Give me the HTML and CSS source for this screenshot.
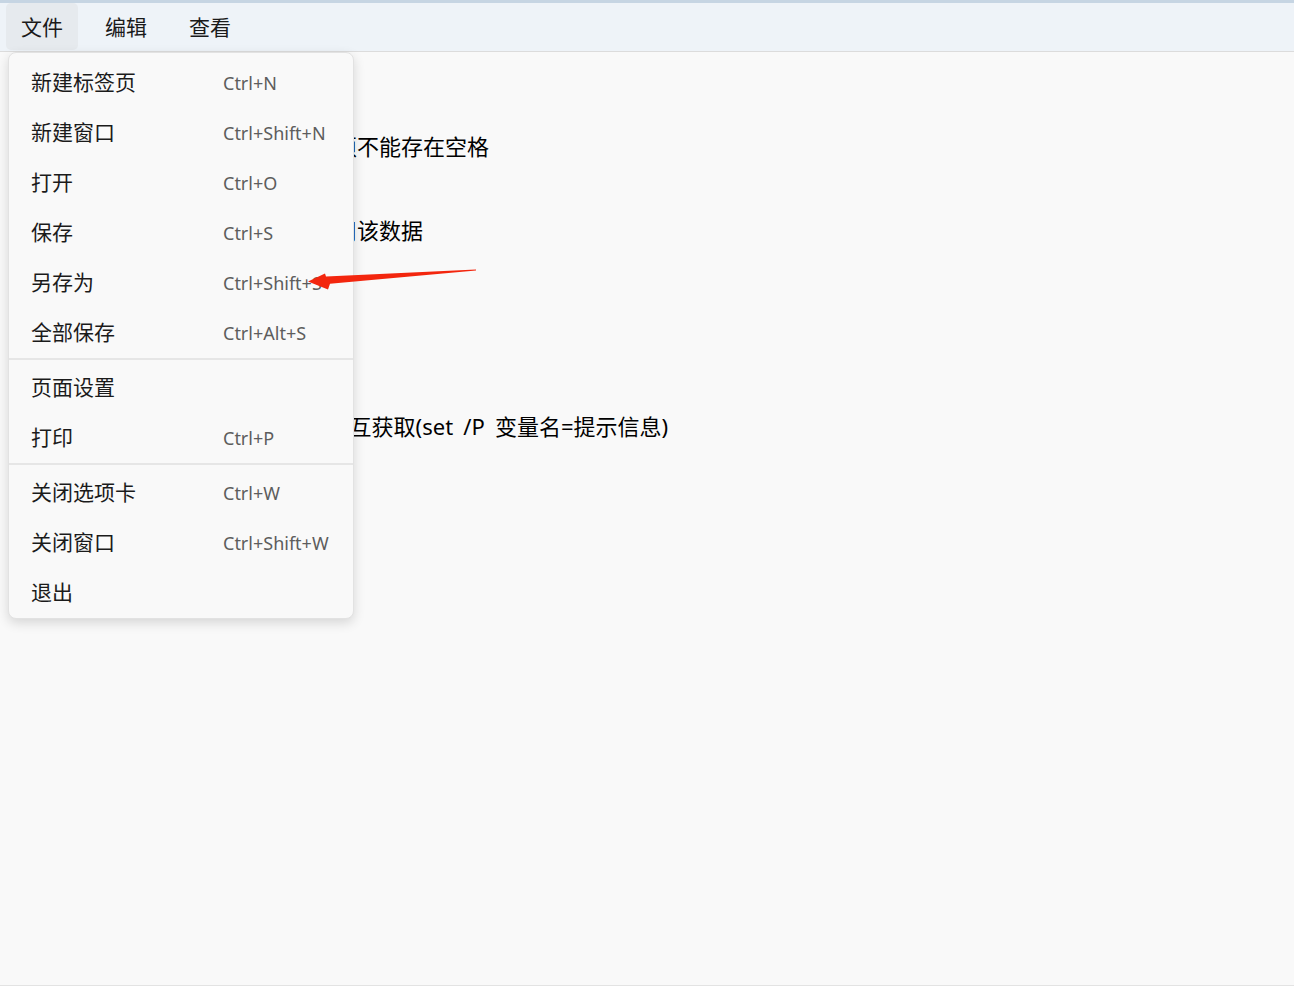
FILE: index.html
```html
<!DOCTYPE html>
<html lang="zh-CN">
<head>
<meta charset="utf-8">
<title>记事本</title>
<link rel="stylesheet" href="styles.css">
</head>
<body>
<div class="app">
  <div class="topline"></div>
  <nav class="menubar">
    <div class="mb-item active">文件</div>
    <div class="mb-item">编辑</div>
    <div class="mb-item">查看</div>
  </nav>
  <main class="editor">
    <div class="line"></div>
    <div class="line"></div>
    <div class="line">一、变量定义时等号前后两边必须不能存在空格</div>
    <div class="line"></div>
    <div class="line"></div>
    <div class="line">二、用百分号包裹变量名即可引用该数据</div>
    <div class="line"></div>
    <div class="line"></div>
    <div class="line"></div>
    <div class="line"></div>
    <div class="line"></div>
    <div class="line"></div>
    <div class="line wide">3、变量的值也可以通过与用户交互获取(set /P 变量名=提示信息)</div>
  </main>

  <div class="menu">
    <div class="mi"><span class="lbl">新建标签页</span><span class="sc">Ctrl+N</span></div>
    <div class="mi"><span class="lbl">新建窗口</span><span class="sc">Ctrl+Shift+N</span></div>
    <div class="mi"><span class="lbl">打开</span><span class="sc">Ctrl+O</span></div>
    <div class="mi"><span class="lbl">保存</span><span class="sc">Ctrl+S</span></div>
    <div class="mi"><span class="lbl">另存为</span><span class="sc">Ctrl+Shift+S</span></div>
    <div class="mi"><span class="lbl">全部保存</span><span class="sc">Ctrl+Alt+S</span></div>
    <div class="sep"></div>
    <div class="mi"><span class="lbl">页面设置</span><span class="sc"></span></div>
    <div class="mi"><span class="lbl">打印</span><span class="sc">Ctrl+P</span></div>
    <div class="sep"></div>
    <div class="mi"><span class="lbl">关闭选项卡</span><span class="sc">Ctrl+W</span></div>
    <div class="mi"><span class="lbl">关闭窗口</span><span class="sc">Ctrl+Shift+W</span></div>
    <div class="mi"><span class="lbl">退出</span><span class="sc"></span></div>
  </div>

  <svg class="arrow" width="180" height="30" viewBox="300 265 180 30" xmlns="http://www.w3.org/2000/svg">
    <polygon points="308,281.5 325,273.5 326,276.6 476,269.4 476,270.4 330,283.8 328,289.5" fill="#f3260e"/>
  </svg>
</div>
</body>
</html>
```

FILE: styles.css
```css
* { box-sizing: border-box; }
html, body { margin: 0; padding: 0; }
body {
  background: #f9f9f9;
  font-family: "Microsoft YaHei", "Noto Sans CJK SC", "Noto Sans", sans-serif;
  color: #000;
}
.app {
  position: relative;
  height: 986px;
  display: flex;
  flex-direction: column;
  overflow: hidden;
}
.topline {
  height: 3px;
  background: #c6d5e3;
  flex: none;
}
.menubar {
  height: 49px;
  flex: none;
  background: #eef3f8;
  border-bottom: 1px solid #dcdcdc;
  display: flex;
  align-items: flex-start;
  gap: 12px;
  padding-left: 6px;
}
.mb-item {
  height: 47px;
  width: 72px;
  display: flex;
  align-items: center;
  justify-content: center;
  font-size: 21px;
  color: #1a1a1a;
  border-radius: 5px;
  padding-bottom: 2px;
}
.mb-item.active { background: #e6eaee; }
.editor {
  flex: 1;
  padding: 24px 0 0 27px;
  border-bottom: 1px solid #e3e3e3;
  font-family: "Noto Sans", "Noto Sans CJK SC", sans-serif;
  font-size: 22px;
}
.line {
  height: 28px;
  line-height: 28px;
  white-space: pre;
}
.line.wide {
  padding-left: 2px;
  word-spacing: 4.5px;
}
.menu {
  position: absolute;
  top: 52px;
  left: 8px;
  width: 346px;
  height: 567px;
  background: #f9f9f9;
  border: 1px solid #e2e2e2;
  border-radius: 8px;
  box-shadow: 0 4px 12px rgba(0, 0, 0, 0.14);
  padding-top: 5px;
}
.mi {
  height: 50px;
  display: grid;
  grid-template-columns: 192px 1fr;
  align-items: center;
  padding-left: 22px;
  padding-bottom: 4px;
}
.lbl {
  font-size: 21px;
  color: #1b1b1b;
}
.sc {
  font-family: "Noto Sans", "Open Sans", sans-serif;
  font-size: 18px;
  color: #5d5d5d;
  position: relative;
  top: 2px;
}
.sep {
  height: 2px;
  background: #e6e6e6;
  margin-bottom: 3px;
}
.arrow {
  position: absolute;
  left: 300px;
  top: 265px;
}
```
